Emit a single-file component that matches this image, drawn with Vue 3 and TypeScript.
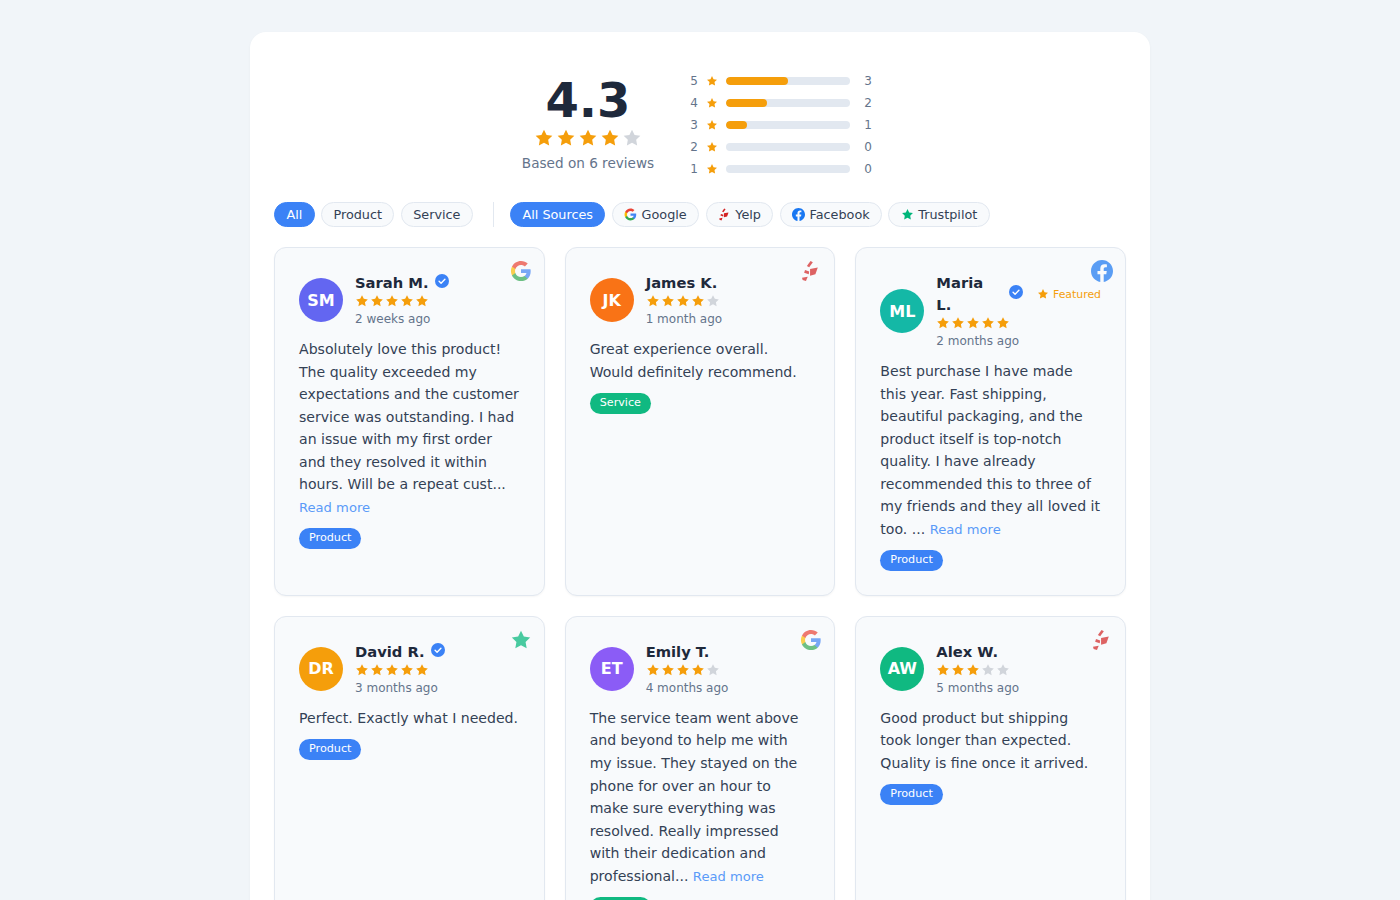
<script setup lang="ts">
type Source = 'google' | 'yelp' | 'facebook' | 'trustpilot'

interface Review {
  initials: string
  name: string
  color: string
  rating: number
  date: string
  source: Source
  verified: boolean
  featured?: boolean
  text: string
  more: boolean
  tag: 'Product' | 'Service'
}

const bars = [
  { star: 5, count: 3, pct: 50 },
  { star: 4, count: 2, pct: 33 },
  { star: 3, count: 1, pct: 17 },
  { star: 2, count: 0, pct: 0 },
  { star: 1, count: 0, pct: 0 },
]

const typeFilters = ['All', 'Product', 'Service']
const sourceFilters: { label: string; icon: Source }[] = [
  { label: 'Google', icon: 'google' },
  { label: 'Yelp', icon: 'yelp' },
  { label: 'Facebook', icon: 'facebook' },
  { label: 'Trustpilot', icon: 'trustpilot' },
]

const reviews: Review[] = [
  {
    initials: 'SM', name: 'Sarah M.', color: '#6366f1', rating: 5, date: '2 weeks ago', source: 'google', verified: true,
    text: 'Absolutely love this product! The quality exceeded my expectations and the customer service was outstanding. I had an issue with my first order and they resolved it within hours. Will be a repeat cust...',
    more: true, tag: 'Product',
  },
  {
    initials: 'JK', name: 'James K.', color: '#f97316', rating: 4, date: '1 month ago', source: 'yelp', verified: false,
    text: 'Great experience overall. Would definitely recommend.',
    more: false, tag: 'Service',
  },
  {
    initials: 'ML', name: 'Maria L.', color: '#14b8a6', rating: 5, date: '2 months ago', source: 'facebook', verified: true, featured: true,
    text: 'Best purchase I have made this year. Fast shipping, beautiful packaging, and the product itself is top-notch quality. I have already recommended this to three of my friends and they all loved it too. ...',
    more: true, tag: 'Product',
  },
  {
    initials: 'DR', name: 'David R.', color: '#f59e0b', rating: 5, date: '3 months ago', source: 'trustpilot', verified: true,
    text: 'Perfect. Exactly what I needed.',
    more: false, tag: 'Product',
  },
  {
    initials: 'ET', name: 'Emily T.', color: '#8b5cf6', rating: 4, date: '4 months ago', source: 'google', verified: false,
    text: 'The service team went above and beyond to help me with my issue. They stayed on the phone for over an hour to make sure everything was resolved. Really impressed with their dedication and professional...',
    more: true, tag: 'Service',
  },
  {
    initials: 'AW', name: 'Alex W.', color: '#10b981', rating: 3, date: '5 months ago', source: 'yelp', verified: false,
    text: 'Good product but shipping took longer than expected. Quality is fine once it arrived.',
    more: false, tag: 'Product',
  },
]

const starPath = 'M12 2l3.09 6.26L22 9.27l-5 4.87 1.18 6.88L12 17.77l-6.18 3.25L7 14.14 2 9.27l6.91-1.01L12 2z'
const facebookPath = 'M24 12.073c0-6.627-5.373-12-12-12s-12 5.373-12 12c0 5.99 4.388 10.954 10.125 11.854v-8.385H7.078v-3.47h3.047V9.43c0-3.007 1.792-4.669 4.533-4.669 1.312 0 2.686.235 2.686.235v2.953H15.83c-1.491 0-1.956.925-1.956 1.874v2.25h3.328l-.532 3.47h-2.796v8.385C19.612 23.027 24 18.062 24 12.073z'
const googlePaths = [
  { d: 'M22.56 12.25c0-.78-.07-1.53-.2-2.25H12v4.26h5.92c-.26 1.37-1.04 2.53-2.21 3.31v2.77h3.57c2.08-1.92 3.28-4.74 3.28-8.09z', fill: '#4285F4' },
  { d: 'M12 23c2.97 0 5.46-.98 7.28-2.66l-3.57-2.77c-.98.66-2.23 1.06-3.71 1.06-2.86 0-5.29-1.93-6.16-4.53H2.18v2.84C3.99 20.53 7.7 23 12 23z', fill: '#34A853' },
  { d: 'M5.84 14.09c-.22-.66-.35-1.36-.35-2.09s.13-1.43.35-2.09V7.07H2.18C1.43 8.55 1 10.22 1 12s.43 3.45 1.18 4.93l3.66-2.84z', fill: '#FBBC05' },
  { d: 'M12 5.38c1.62 0 3.06.56 4.21 1.64l3.15-3.15C17.45 2.09 14.97 1 12 1 7.7 1 3.99 3.47 2.18 7.07l3.66 2.84c.87-2.6 3.3-4.53 6.16-4.53z', fill: '#EA4335' },
]
const yelpPolys = ['11.5 1 14 2.5 10 8 7.5 6.5', '11 9.8 19.4 8.2 16.8 15.6 11 17.2', '5.5 11 10 12.5 9.5 15.5 4.5 14', '2.2 19.3 8.4 18.2 6.5 22.9 2.9 21.8']
</script>

<template>
  <div class="page">
    <div class="widget">
      <section class="summary">
        <div class="score">
          <div class="score-value">4.3</div>
          <div class="score-stars">
            <svg v-for="n in 5" :key="n" viewBox="0 0 24 24" width="20" height="20">
              <path :d="starPath" :fill="n <= 4 ? '#f59e0b' : '#d1d5db'" />
            </svg>
          </div>
          <div class="score-label">Based on 6 reviews</div>
        </div>
        <div class="bars">
          <div v-for="bar in bars" :key="bar.star" class="bar-row">
            <span class="bar-num">{{ bar.star }}</span>
            <svg viewBox="0 0 24 24" width="12" height="12"><path :d="starPath" fill="#f59e0b" /></svg>
            <div class="bar-track"><div class="bar-fill" :style="{ width: bar.pct + '%' }"></div></div>
            <span class="bar-count">{{ bar.count }}</span>
          </div>
        </div>
      </section>

      <div class="filters">
        <button v-for="(f, i) in typeFilters" :key="f" class="pill" :class="{ active: i === 0 }">{{ f }}</button>
        <span class="divider"></span>
        <button class="pill active">All Sources</button>
        <button v-for="f in sourceFilters" :key="f.label" class="pill">
          <svg class="pill-icon" viewBox="0 0 24 24" width="13" height="13">
            <template v-if="f.icon === 'google'">
              <path v-for="p in googlePaths" :key="p.fill" :d="p.d" :fill="p.fill" />
            </template>
            <template v-else-if="f.icon === 'yelp'">
              <polygon v-for="p in yelpPolys" :key="p" :points="p" fill="#d32323" />
            </template>
            <path v-else-if="f.icon === 'facebook'" :d="facebookPath" fill="#1877f2" />
            <path v-else :d="starPath" fill="#00b67a" />
          </svg>
          {{ f.label }}
        </button>
      </div>

      <div class="grid">
        <article v-for="r in reviews" :key="r.name" class="card">
          <svg class="source" viewBox="0 0 24 24" width="22" height="22">
            <template v-if="r.source === 'google'">
              <path v-for="p in googlePaths" :key="p.fill" :d="p.d" :fill="p.fill" />
            </template>
            <template v-else-if="r.source === 'yelp'">
              <polygon v-for="p in yelpPolys" :key="p" :points="p" fill="#d32323" />
            </template>
            <path v-else-if="r.source === 'facebook'" :d="facebookPath" fill="#1877f2" />
            <path v-else :d="starPath" fill="#00b67a" />
          </svg>

          <header class="card-head">
            <div class="avatar" :style="{ background: r.color }">{{ r.initials }}</div>
            <div class="author">
              <div class="name-row">
                <span class="name">{{ r.name }}</span>
                <svg v-if="r.verified" class="check" viewBox="0 0 24 24" width="14" height="14">
                  <circle cx="12" cy="12" r="12" fill="#3b82f6" />
                  <path d="M7 12.5l3.4 3.2L17 9" fill="none" stroke="#fff" stroke-width="2.4" stroke-linecap="round" stroke-linejoin="round" />
                </svg>
                <span v-if="r.featured" class="featured">
                  <svg viewBox="0 0 24 24" width="12" height="12"><path :d="starPath" fill="#f59e0b" /></svg>
                  Featured
                </span>
              </div>
              <div class="stars">
                <svg v-for="n in 5" :key="n" viewBox="0 0 24 24" width="14" height="14">
                  <path :d="starPath" :fill="n <= r.rating ? '#f59e0b' : '#d1d5db'" />
                </svg>
              </div>
              <div class="date">{{ r.date }}</div>
            </div>
          </header>

          <p class="text">{{ r.text }} <a v-if="r.more" class="more">Read more</a></p>
          <span class="tag" :class="r.tag === 'Service' ? 'tag-service' : 'tag-product'">{{ r.tag }}</span>
        </article>
      </div>
    </div>
  </div>
</template>

<style>
body {
  background: #f1f5f9;
}
</style>

<style scoped>
.page {
  font-family: "DejaVu Sans", sans-serif;
  padding: 32px 0;
}
.widget {
  width: 900px;
  margin: 0 auto;
  padding: 24px;
  box-sizing: border-box;
  background: #fff;
  border-radius: 16px;
  box-shadow: 0 1px 3px rgba(0, 0, 0, 0.04);
}
.summary {
  display: flex;
  justify-content: center;
  align-items: center;
  gap: 36px;
  padding: 18px 0 12px;
  margin-bottom: 14px;
}
.score {
  padding-bottom: 3px;
  text-align: center;
}
.score-value {
  font-size: 48px;
  font-weight: 700;
  line-height: 1;
  color: #1e293b;
}
.score-stars {
  display: flex;
  justify-content: center;
  gap: 2px;
  margin: 4px 0 7px;
}
.score-label {
  font-size: 13.6px;
  color: #64748b;
}
.bars {
  display: flex;
  flex-direction: column;
  gap: 8px;
}
.bar-row {
  display: flex;
  align-items: center;
  gap: 8px;
  height: 14px;
  font-size: 12px;
  color: #64748b;
}
.bar-num {
  width: 8px;
}
.bar-track {
  width: 124px;
  height: 8px;
  border-radius: 4px;
  background: #e2e8f0;
  overflow: hidden;
}
.bar-fill {
  height: 100%;
  border-radius: 4px;
  background: #f59e0b;
}
.bar-count {
  width: 14px;
  margin-left: 6px;
}
.filters {
  display: flex;
  align-items: center;
  gap: 6.4px;
  margin-bottom: 20px;
}
.pill {
  display: inline-flex;
  align-items: center;
  gap: 4.4px;
  padding: 4px 11.4px;
  border: 1px solid #e2e8f0;
  border-radius: 999px;
  background: #f8fafc;
  color: #334155;
  font-family: inherit;
  font-size: 12.8px;
}
.pill.active {
  background: #3b82f6;
  border-color: #3b82f6;
  color: #fff;
}
.divider {
  width: 1px;
  height: 25px;
  margin: 0 9.4px 0 14px;
  background: #e2e8f0;
}
.grid {
  display: grid;
  grid-template-columns: repeat(3, 1fr);
  gap: 20px;
}
.card {
  position: relative;
  padding: 24px;
  background: #f8fafc;
  border: 1px solid #e2e8f0;
  border-radius: 12px;
  box-shadow: 0 1px 2px rgba(0, 0, 0, 0.04);
}
.source {
  position: absolute;
  top: 12px;
  right: 12px;
  opacity: 0.7;
}
.card-head {
  display: flex;
  align-items: center;
  gap: 12px;
  margin-bottom: 10px;
}
.avatar {
  flex-shrink: 0;
  width: 44px;
  height: 44px;
  border-radius: 50%;
  display: flex;
  align-items: center;
  justify-content: center;
  color: #fff;
  font-size: 16px;
  font-weight: 700;
}
.author {
  min-width: 0;
}
.name-row {
  display: flex;
  align-items: center;
  gap: 6px;
}
.name {
  font-size: 14.72px;
  font-weight: 700;
  line-height: 1.5;
  color: #1e293b;
}
.check {
  flex-shrink: 0;
  margin-top: -4px;
}
.stars {
  display: flex;
  gap: 1px;
}
.date {
  font-size: 12px;
  line-height: 1.5;
  margin-top: 2px;
  color: #64748b;
}
.featured {
  display: inline-flex;
  align-items: center;
  gap: 4px;
  flex-shrink: 0;
  margin-left: 8px;
  font-size: 10.88px;
  color: #f59e0b;
}
.text {
  margin: 0;
  font-size: 14.08px;
  line-height: 1.6;
  color: #334155;
}
.more {
  font-size: 13.12px;
  color: #5b9bf8;
}
.tag {
  display: inline-block;
  margin-top: 9.6px;
  padding: 2px 10px 4px;
  border-radius: 999px;
  font-size: 11.2px;
  line-height: 15px;
  color: #fff;
}
.tag-product {
  background: #3b82f6;
}
.tag-service {
  background: #10b981;
}
</style>
